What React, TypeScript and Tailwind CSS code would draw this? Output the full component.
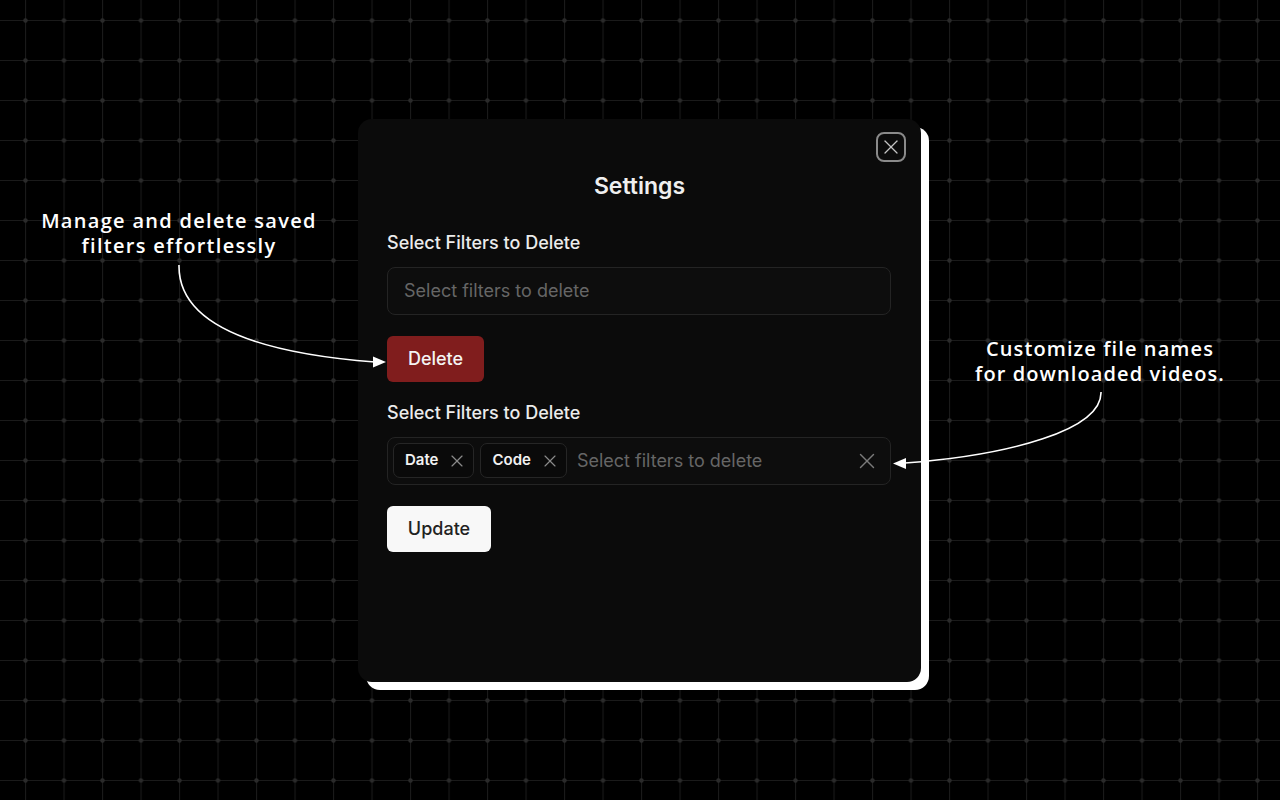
import { X } from "lucide-react"

function GridBackdrop() {
  return (
    <svg className="absolute inset-0 h-full w-full" aria-hidden="true">
      <defs>
        <pattern id="grid" x="25" y="20" width="38.5" height="40" patternUnits="userSpaceOnUse">
          <path d="M0 0.5H38.5M0.5 0V40" stroke="#1a1a1a" strokeWidth="1.2" fill="none" />
          <circle cx="0.5" cy="0.5" r="2.2" fill="#2a2a2a" />
          <circle cx="39" cy="0.5" r="2.2" fill="#2a2a2a" />
          <circle cx="0.5" cy="40.5" r="2.2" fill="#2a2a2a" />
          <circle cx="39" cy="40.5" r="2.2" fill="#2a2a2a" />
        </pattern>
      </defs>
      <rect width="100%" height="100%" fill="url(#grid)" />
    </svg>
  )
}

function Arrows() {
  return (
    <svg className="pointer-events-none absolute inset-0 h-full w-full" aria-hidden="true">
      <path d="M179 265 C 178 320, 245 352, 375 362" stroke="#fff" strokeWidth="1.6" fill="none" />
      <polygon points="386,362 373,356.5 373,367.5" fill="#fff" />
      <path d="M1101 392 C 1102 430, 1010 455, 905 463" stroke="#fff" strokeWidth="1.6" fill="none" />
      <polygon points="893,463.5 906,458 906,469" fill="#fff" />
    </svg>
  )
}

function Chip({ label }: { label: string }) {
  return (
    <div className="flex h-[35px] items-center gap-[9px] rounded-[7px] border border-[#262626] bg-[#0a0a0a] pl-[11px] pr-[6px]">
      <span className="text-[15px] font-semibold text-[#f2f2f2]">{label}</span>
      <X className="h-[20px] w-[20px] text-[#8a8a8a]" strokeWidth={1.4} />
    </div>
  )
}

export default function App() {
  return (
    <div className="relative h-[800px] w-[1280px] overflow-hidden bg-black font-['Inter',sans-serif]">
      <GridBackdrop />

      <div className="absolute left-[0px] top-[208px] w-[358px] text-center font-['Open_Sans',sans-serif] text-[20px] font-semibold leading-[25px] tracking-[1.3px] text-white">
        Manage and delete saved
        <br />
        filters effortlessly
      </div>
      <div className="absolute left-[950px] top-[336px] w-[300px] text-center font-['Open_Sans',sans-serif] text-[20px] font-semibold leading-[25px] tracking-[1.1px] text-white">
        Customize file names
        <br />
        for downloaded videos.
      </div>

      <div className="relative flex h-full w-full items-center justify-center">
        <div className="mr-[1px] flex h-[563px] w-[563px] flex-col rounded-[14px] bg-[#0b0b0b] shadow-[8px_8px_0_0_#ffffff]">
          <div className="flex justify-end pr-[15px] pt-[13px]">
            <button
              type="button"
              className="flex h-[30px] w-[30px] items-center justify-center rounded-[8px] border-2 border-[#8a8a8a] text-[#c4c4c4]"
            >
              <X className="h-[24px] w-[24px]" strokeWidth={1.3} />
            </button>
          </div>

          <h2 className="mt-[9px] text-center text-[23px] font-semibold leading-[30px] text-[#efefef]">
            Settings
          </h2>

          <div className="flex flex-col px-[29px]">
            <label className="mt-[30px] text-[18px] font-medium leading-[24px] text-[#ececec]">
              Select Filters to Delete
            </label>
            <div className="mt-[12px] flex h-[48px] w-[504px] items-center rounded-[8px] border border-[#242424] bg-[#0d0d0d] px-[16px]">
              <span className="text-[18px] text-[#666666]">Select filters to delete</span>
            </div>

            <button
              type="button"
              className="mt-[21px] h-[46px] w-[97px] rounded-[6px] bg-[#801d1d] text-[18px] font-medium text-[#f4f4f4]"
            >
              Delete
            </button>

            <label className="mt-[19px] text-[18px] font-medium leading-[24px] text-[#ececec]">
              Select Filters to Delete
            </label>
            <div className="mt-[12px] flex h-[48px] w-[504px] items-center gap-[6px] rounded-[8px] border border-[#242424] bg-[#0d0d0d] pl-[5px] pr-[10px]">
              <Chip label="Date" />
              <Chip label="Code" />
              <span className="ml-[4px] flex-1 text-[18px] text-[#666666]">Select filters to delete</span>
              <X className="h-[26px] w-[26px] text-[#7a7a7a]" strokeWidth={1.3} />
            </div>

            <button
              type="button"
              className="mt-[21px] h-[46px] w-[104px] rounded-[6px] bg-[#f8f8f8] text-[18px] font-medium text-[#222222]"
            >
              Update
            </button>
          </div>
        </div>
      </div>

      <Arrows />
    </div>
  )
}
